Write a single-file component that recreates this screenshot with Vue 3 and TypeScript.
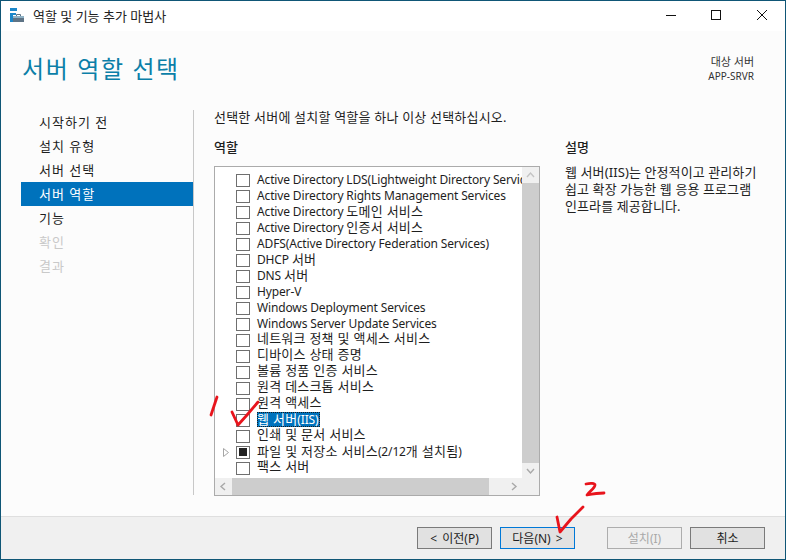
<script setup lang="ts">
interface Role { label: string; state?: 'mixed'; selected?: boolean; expander?: boolean }
const steps = [
  { label: '시작하기 전' },
  { label: '설치 유형' },
  { label: '서버 선택' },
  { label: '서버 역할', active: true },
  { label: '기능' },
  { label: '확인', disabled: true },
  { label: '결과', disabled: true },
]
const roles: Role[] = [
  { label: 'Active Directory LDS(Lightweight Directory Services)' },
  { label: 'Active Directory Rights Management Services' },
  { label: 'Active Directory 도메인 서비스' },
  { label: 'Active Directory 인증서 서비스' },
  { label: 'ADFS(Active Directory Federation Services)' },
  { label: 'DHCP 서버' },
  { label: 'DNS 서버' },
  { label: 'Hyper-V' },
  { label: 'Windows Deployment Services' },
  { label: 'Windows Server Update Services' },
  { label: '네트워크 정책 및 액세스 서비스' },
  { label: '디바이스 상태 증명' },
  { label: '볼륨 정품 인증 서비스' },
  { label: '원격 데스크톱 서비스' },
  { label: '원격 액세스' },
  { label: '웹 서버(IIS)', selected: true },
  { label: '인쇄 및 문서 서비스' },
  { label: '파일 및 저장소 서비스(2/12개 설치됨)', state: 'mixed', expander: true },
  { label: '팩스 서버' },
]
// Korean runs are set slightly larger than Latin runs, as in the original UI font pairing.
function runs(text: string): { text: string; ko: boolean }[] {
  return text
    .split(/([가-힣]+(?:\s+[가-힣]+)*)/)
    .filter(Boolean)
    .map((t) => ({ text: t, ko: /[가-힣]/.test(t) }))
}
</script>

<template>
  <div class="window">
    <header class="titlebar">
      <svg class="app-icon" width="14" height="14" viewBox="0 0 14 14">
        <rect x="0" y="0" width="7" height="3" fill="#1c87c9" />
        <rect x="0" y="5" width="3" height="9" fill="#1c87c9" />
        <path d="M3 5h3v2H3z" fill="#1c87c9" />
        <rect x="3" y="8" width="11" height="6" fill="#5f7486" />
        <rect x="3" y="8" width="11" height="2" fill="#8fb2c6" />
        <path d="M6.500 8V6.500h4V8" fill="none" stroke="#5f7486" stroke-width="1" />
      </svg>
      <span class="title">역할 및 기능 추가 마법사</span>
      <div class="controls">
        <svg width="12" height="12" viewBox="0 0 12 12"><path d="M1 6.500h10" stroke="#111" fill="none" /></svg>
        <svg width="12" height="12" viewBox="0 0 12 12"><rect x="1.500" y="1.500" width="9" height="9" stroke="#111" fill="none" /></svg>
        <svg width="12" height="12" viewBox="0 0 12 12"><path d="M1 1l10 10M11 1L1 11" stroke="#111" fill="none" /></svg>
      </div>
    </header>

    <div class="body">
      <div class="heading">
        <h1>서버 역할 선택</h1>
        <div class="target">
          <div class="target-label">대상 서버</div>
          <div>APP-SRVR</div>
        </div>
      </div>

      <div class="content">
        <nav class="steps">
          <div
            v-for="s in steps"
            :key="s.label"
            class="step"
            :class="{ active: s.active, disabled: s.disabled }"
          >{{ s.label }}</div>
        </nav>

        <main class="main">
          <p class="intro">선택한 서버에 설치할 역할을 하나 이상 선택하십시오.</p>
          <div class="columns">
            <section class="roles">
              <h2>역할</h2>
              <div class="listbox">
                <div class="list-area">
                  <div class="rows">
                    <div v-for="r in roles" :key="r.label" class="row">
                      <span class="expander">
                        <svg v-if="r.expander" width="6" height="9" viewBox="0 0 6 9"><path d="M.5.5l5 4-5 4z" fill="#fff" stroke="#a6a6a6" /></svg>
                      </span>
                      <span class="check"><span v-if="r.state === 'mixed'" class="mixed"></span></span>
                      <span class="label" :class="{ selected: r.selected }"><span
                        v-for="(run, i) in runs(r.label)"
                        :key="i"
                        :class="run.ko ? 'ko' : 'latin'"
                      >{{ run.text }}</span></span>
                    </div>
                  </div>
                  <div class="vscroll">
                    <svg class="arrow" width="17" height="16" viewBox="0 0 17 16"><path d="M5 10l3.500-4 3.500 4" fill="none" stroke="#c4c4c4" stroke-width="1.400" /></svg>
                    <div class="vtrack"><div class="vthumb"></div></div>
                    <svg class="arrow" width="17" height="15" viewBox="0 0 17 15"><path d="M5 6l3.500 4 3.500-4" fill="none" stroke="#a8a8a8" stroke-width="1.400" /></svg>
                  </div>
                </div>
                <div class="hscroll">
                  <svg class="arrow" width="17" height="17" viewBox="0 0 17 17"><path d="M10 5L6 8.500l4 3.500" fill="none" stroke="#a8a8a8" stroke-width="1.400" /></svg>
                  <div class="htrack"><div class="hthumb"></div></div>
                  <svg class="arrow" width="17" height="17" viewBox="0 0 17 17"><path d="M7 5l4 3.500-4 3.500" fill="none" stroke="#a8a8a8" stroke-width="1.400" /></svg>
                  <div class="corner"></div>
                </div>
              </div>
            </section>
            <aside class="desc">
              <h2>설명</h2>
              <p>웹 서버(IIS)는 안정적이고 관리하기<br />쉽고 확장 가능한 웹 응용 프로그램<br />인프라를 제공합니다.</p>
            </aside>
          </div>
        </main>
      </div>
    </div>

    <footer class="footer">
      <button class="btn">&lt; 이전(P)</button>
      <button class="btn primary">다음(N) &gt;</button>
      <button class="btn off install">설치(I)</button>
      <button class="btn cancel">취소</button>
    </footer>

    <svg class="ink" width="786" height="560" viewBox="0 0 786 560">
      <g fill="none" stroke="#e8141c" stroke-width="2.800" stroke-linecap="round" stroke-linejoin="round">
        <path d="M217 397l-6 18" />
        <path d="M232 412l6 13 9-10 11-13" />
        <path d="M586 484c4-1 9-1 9 1 0 3-5 6-8 10 5-1 12-2 17-2" />
        <path d="M557 517l3 15 11-13 12-12" />
      </g>
    </svg>
  </div>
</template>

<style>
html, body { margin: 0; padding: 0; background: #fff; }
</style>

<style scoped>
* { box-sizing: border-box; }
.window {
  position: relative;
  width: 786px;
  height: 560px;
  display: flex;
  flex-direction: column;
  border: 1px solid #0f5676;
  background: #fcfcfc;
  overflow: hidden;
  font-family: "Noto Sans", "Noto Sans CJK KR", sans-serif;
  font-size: 12px;
  color: #1e1e1e;
}
.titlebar {
  flex: none;
  height: 30px;
  background: #fff;
  display: flex;
  align-items: center;
  padding-left: 9px;
}
.app-icon { margin-right: 9px; margin-top: -2px; }
.title { font-size: 13px; color: #222; margin-top: -1px; }
.controls {
  margin-left: auto;
  margin-top: -2px;
  padding-right: 17px;
  display: flex;
  gap: 33px;
}
.controls svg:last-child { margin-left: 1px; }
.body { flex: 1; min-height: 0; display: flex; flex-direction: column; }
.heading {
  height: 79px;
  padding: 20px 31px 0 21px;
  display: flex;
  justify-content: space-between;
}
h1 {
  margin: 0;
  font-size: 24px;
  font-weight: 400;
  line-height: 36px;
  letter-spacing: 1.6px;
  color: #0b7fa8;
}
.target {
  margin-top: 4px;
  text-align: right;
  font-size: 10px;
  line-height: 14px;
  color: #333;
}
.target-label { font-size: 11px; }
.content { flex: 1; min-height: 0; display: flex; }
.steps { width: 172px; margin-left: 20px; }
.step {
  height: 24px;
  line-height: 25px;
  padding-left: 18px;
  font-size: 13px;
  letter-spacing: 1px;
}
.step.active { background: #0072bc; color: #fff; }
.step.disabled { color: #c9c9c9; }
.main {
  flex: 1;
  min-width: 0;
  height: 385px;
  border-left: 1px solid #c8c8c8;
  padding-left: 20px;
}
.intro { margin: 0; height: 19px; line-height: 15px; font-size: 13px; letter-spacing: 0.2px; }
.columns { display: flex; margin-top: 11px; }
.roles { width: 326px; flex: none; }
h2 { margin: 0 0 11px; font-size: 13px; font-weight: 500; line-height: 15px; }
.listbox {
  width: 326px;
  height: 330px;
  border: 1px solid #ababab;
  background: #fff;
  display: flex;
  flex-direction: column;
}
.list-area { flex: 1; min-height: 0; display: flex; }
.rows { flex: 1; min-width: 0; overflow: hidden; padding-top: 5px; }
.row { height: 16px; display: flex; align-items: center; white-space: nowrap; }
.expander { width: 21px; flex: none; padding-left: 8px; display: flex; align-items: center; }
.check {
  width: 14px;
  height: 13px;
  flex: none;
  border: 1px solid #6f6f6f;
  background: #fff;
  display: flex;
  align-items: center;
  justify-content: center;
}
.mixed { width: 8px; height: 8px; background: #222; }
.label {
  margin-left: 7px;
  padding-right: 1px;
  height: 15px;
  margin-bottom: 1px;
  display: inline-flex;
  align-items: baseline;
  font-size: 12px;
  line-height: 15px;
}
.ko, .latin { display: block; height: 15px; white-space: pre; }
.ko { line-height: 14px; font-family: "Liberation Sans", "Noto Sans CJK KR", sans-serif; font-size: 13px; letter-spacing: 0.2px; }
.latin { line-height: 16px; letter-spacing: -0.14px; }
.label.selected { background: #0072bc; color: #fff; outline: 1px dotted #1d1d1d; outline-offset: -1px; }
.vscroll { width: 17px; flex: none; background: #f0f0f0; display: flex; flex-direction: column; }
.vtrack { flex: 1; }
.vthumb { height: 280px; background: #cdcdcd; }
.arrow { flex: none; display: block; }
.hscroll { height: 17px; flex: none; background: #f0f0f0; display: flex; }
.htrack { flex: 1; }
.hthumb { width: 257px; height: 17px; background: #cdcdcd; }
.corner { width: 17px; flex: none; }
.desc { margin-left: 25px; width: 195px; }
.desc p { margin: -2px 0 0; font-size: 13px; line-height: 17px; color: #222; letter-spacing: .1px; white-space: nowrap; }
.footer {
  flex: none;
  height: 43px;
  background: #f0f0f0;
  border-top: 1px solid #dfdfdf;
  display: flex;
  align-items: flex-start;
  padding: 10px 20px 0 416px;
}
.btn {
  width: 75px;
  height: 22px;
  padding: 0;
  border: 1px solid #7a7a7a;
  background: #e1e1e1;
  font: inherit;
  font-size: 12px;
  word-spacing: 2px;
  color: #1e1e1e;
}
.primary { margin-left: 8px; border-color: #0078d7; }
.off { border-color: #adadad; background: #efefef; color: #a9a9a9; }
.install { margin-left: 32px; }
.cancel { margin-left: 8px; }
.ink { position: absolute; left: -1px; top: -1px; pointer-events: none; }
</style>
